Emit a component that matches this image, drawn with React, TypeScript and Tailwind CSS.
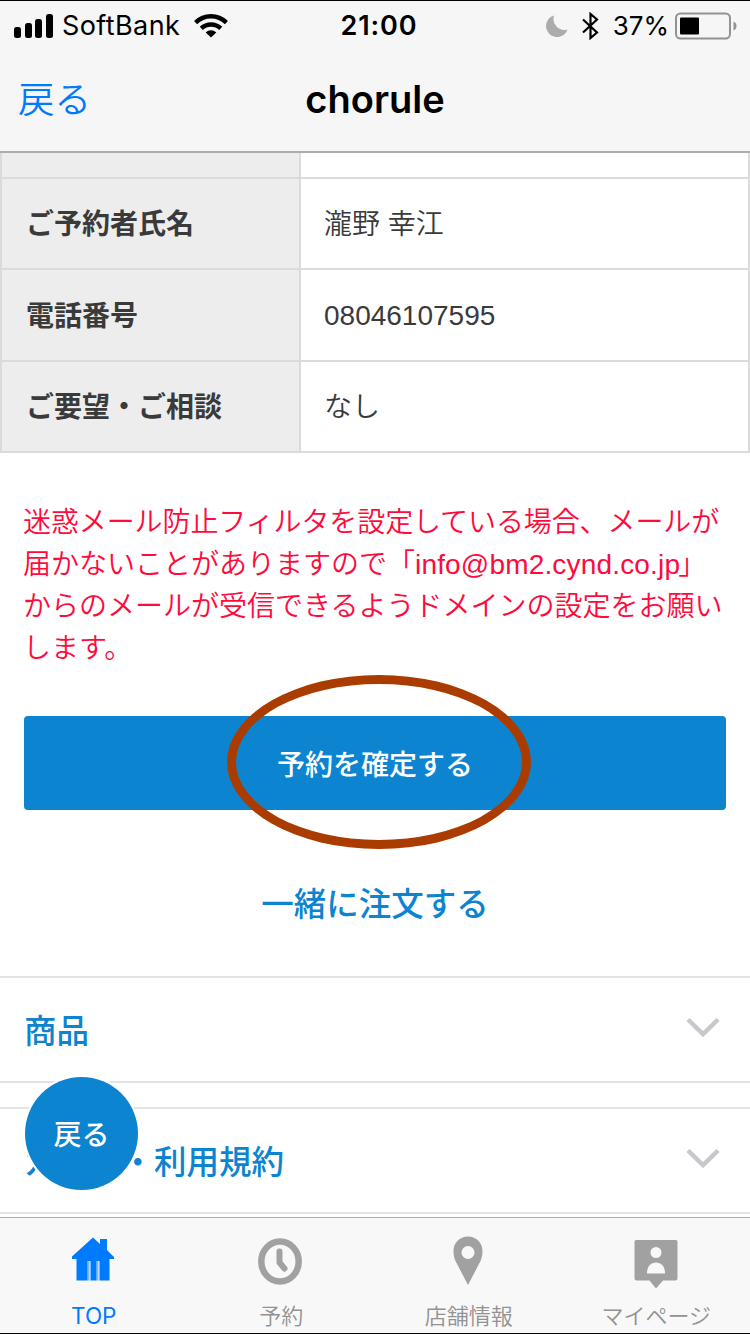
import React from 'react';

interface Row {
  label: string;
  value: string;
  height: string;
}

const rows: Row[] = [
  { label: 'ご予約者氏名', value: '瀧野 幸江', height: 'h-[91px]' },
  { label: '電話番号', value: '08046107595', height: 'h-[92px]' },
  { label: 'ご要望・ご相談', value: 'なし', height: 'h-[91px]' },
];

const StatusBar: React.FC = () => (
  <div className="grid h-[49px] grid-cols-3 items-center px-3.5 font-['Inter','Noto_Sans_CJK_JP',sans-serif] text-black">
    <div className="flex items-center">
      <svg width="40" height="24" viewBox="0 0 40 24">
        <rect x="0" y="13" width="7" height="11" rx="2.5" />
        <rect x="11" y="9" width="7" height="15" rx="2.5" />
        <rect x="21" y="5" width="7" height="19" rx="2.5" />
        <rect x="32" y="0" width="7" height="24" rx="2.5" />
      </svg>
      <span className="ml-2 text-[27px] leading-none tracking-[0.4px]">SoftBank</span>
      <svg className="ml-3.5" width="34" height="24" viewBox="0 0 34 24" fill="none" stroke="#000" strokeWidth="4.4">
        <path d="M1.6 8.6a22 22 0 0 1 30.8 0" />
        <path d="M7.3 14.4a14 14 0 0 1 19.4 0" />
        <path d="M17 23.6l-5.3-5.2a7.6 7.6 0 0 1 10.6 0z" fill="#000" stroke="none" />
      </svg>
    </div>
    <div className="pl-2 text-center text-[27px] font-semibold leading-none tracking-[0.9px]">21:00</div>
    <div className="-mr-px flex items-center justify-end">
      <svg width="22" height="22" viewBox="0 0 22 22" fill="#acacac">
        <path d="M8 0.5A11 11 0 1 0 21.5 14.5A11 11 0 0 1 8 0.5z" />
      </svg>
      <svg className="ml-3.5" width="17" height="28" viewBox="0 0 17 28" fill="none" stroke="#000" strokeWidth="2.2">
        <path d="M1 7.5l14 13-6.5 5.5V2L15 7.5l-14 13" />
      </svg>
      <span className="ml-3.5 text-[26px] leading-none">37%</span>
      <svg className="ml-1.5" width="62" height="28" viewBox="0 0 62 28">
        <rect x="1" y="1.5" width="54" height="25" rx="4.5" fill="none" stroke="#929292" strokeWidth="2" />
        <rect x="5" y="5.5" width="19" height="17" rx="1" />
        <path d="M58.500 9.500c4 1.500 4 7.500 0 9z" fill="#929292" />
      </svg>
    </div>
  </div>
);

const NavBar: React.FC = () => (
  <div className="grid h-[101px] grid-cols-3 items-center px-[18px] font-['Inter','Noto_Sans_CJK_JP',sans-serif]">
    <span className="text-[36.5px] font-[350] leading-none text-[#007aff]">戻る</span>
    <span className="pb-[3px] text-center text-[38px] font-semibold leading-none text-black">chorule</span>
  </div>
);

const Accordion: React.FC<{ title: string }> = ({ title }) => (
  <div className="flex h-[107px] items-center justify-between border-y-2 border-[#e3e3e5] pl-6 pr-[30px]">
    <span className="pt-[5px] text-[32.5px] font-medium leading-none text-[#0c84d0]">{title}</span>
    <svg className="-mt-1" width="34" height="22" viewBox="0 0 34 22" fill="none" stroke="#c8c7cc" strokeWidth="4.5">
      <path d="M2 2.5l15 14.5 15-14.5" />
    </svg>
  </div>
);

const HomeIcon = () => (
  <svg className="-mt-[5px] mr-[2px]" width="42" height="44" viewBox="0 0 42 44" fill="#007aff">
    <path d="M21 0.5L28 7V2h7v11l7 7v2h-4.500v21.500H27.500V24h-3v19.500h-6V24h-3v19.500H4.500V22H0v-2.500z" />
    <path d="M15.500 24h2v19.500h-2zM24.500 24h2v19.500h-2z" opacity="0.5" />
  </svg>
);

const ClockIcon = () => (
  <svg className="mr-[2px] mt-px" width="46" height="49" viewBox="0 0 46 48" fill="none" stroke="#a1a1a1">
    <ellipse cx="23" cy="24" rx="18.700" ry="20" strokeWidth="6.500" />
    <path d="M22.500 14v11l5 6" strokeWidth="6" strokeLinecap="round" strokeLinejoin="round" />
  </svg>
);

const PinIcon = () => (
  <svg className="mr-[2px]" width="30" height="50" viewBox="0 0 30 50" fill="#a1a1a1">
    <path fillRule="evenodd" d="M15 0.5C6.500 0.5 0.5 7 0.5 15c0 3.500 0.5 6.500 2 10L15 49l12.500-24c1.500-3.500 2-6.500 2-10C29.500 7 23.500 0.5 15 0.5zM15 10a6.500 6.500 0 1 1 0 13a6.500 6.500 0 1 1 0-13z" />
  </svg>
);

const ProfileIcon = () => (
  <svg className="mt-[5px]" width="44" height="50" viewBox="0 0 44 50" fill="#a1a1a1">
    <path d="M2 1h40a1.500 1.500 0 0 1 1.500 1.500v37a2 2 0 0 1-2 2H29L22 49.500 15.500 41.500H2.500a2 2 0 0 1-2-2v-37A1.500 1.500 0 0 1 2 1z" />
    <circle cx="22" cy="13.500" r="5.500" fill="#f8f8f8" />
    <path d="M13 34.500c0-7 3.500-11 9-11s9 4 9 11z" fill="#f8f8f8" />
  </svg>
);

const tabs = [
  { label: 'TOP', icon: <HomeIcon />, color: 'text-[#007aff]', font: 'text-[22.5px] font-normal' },
  { label: '予約', icon: <ClockIcon />, color: 'text-[#929292]', font: 'text-[22px] font-[350]' },
  { label: '店舗情報', icon: <PinIcon />, color: 'text-[#929292]', font: 'text-[22px] font-[350]' },
  { label: 'マイページ', icon: <ProfileIcon />, color: 'text-[#929292]', font: 'text-[22px] font-[350]' },
];

const App: React.FC = () => {
  return (
    <div className="relative flex h-[1334px] w-[750px] flex-col overflow-hidden border-y border-black bg-white font-['Liberation_Sans','Noto_Sans_CJK_JP',sans-serif]">
      <header className="border-b-2 border-[#acacac] bg-[#f6f6f6]">
        <StatusBar />
        <NavBar />
      </header>

      {/* Reservation details */}
      <section className="border-x-2 border-[#dbdbdb] text-[28px] leading-none text-[#3a3a3a]">
        <div className="flex h-[26px] border-b-2 border-[#dbdbdb]">
          <div className="w-[299px] border-r-2 border-[#dbdbdb] bg-[#ededed]" />
        </div>
        {rows.map((row) => (
          <div key={row.label} className={`flex border-b-2 border-[#dbdbdb] ${row.height}`}>
            <div className="flex w-[299px] items-center border-r-2 border-[#dbdbdb] bg-[#ededed] pl-6 pt-[3px] font-bold">
              {row.label}
            </div>
            <div className="flex items-center pl-[23px] pt-[2px] font-[350]">{row.value}</div>
          </div>
        ))}
      </section>

      <p className="mt-[49px] whitespace-nowrap pl-[23px] text-[28px] font-[350] leading-[42px] text-[#ff0a3c]">
        <span className="tracking-[-0.1px]">迷惑メール防止フィルタを設定している場合、メールが</span><br />
        届かないことがありますので「<span className="tracking-[0.17px]">info@bm2.cynd.co.jp</span><span className="-ml-[2px]">」</span><br />
        からのメールが受信できるようドメインの設定をお願い<br />
        します。
      </p>

      <div className="relative mx-6 mt-[46px]">
        <button className="h-[94px] w-full rounded bg-[#0c84d0] pt-[5px] text-[28px] font-medium text-white">予約を確定する</button>
        {/* Highlight drawn over the button */}
        <div className="absolute -top-[41px] left-[203px] h-[174px] w-[304px] rounded-[50%] border-[9px] border-[#ab3c00]" />
      </div>

      <div className="flex h-[166px] items-center justify-center pt-6">
        <a className="text-[32.5px] font-medium leading-none text-[#0c84d0]">一緒に注文する</a>
      </div>

      <Accordion title="商品" />
      <div className="mt-6">
        <Accordion title="ガイド・利用規約" />
      </div>

      <nav className="mt-auto grid h-[116px] grid-cols-4 border-t border-[#acacac] bg-[#f8f8f8] font-['Inter','Noto_Sans_CJK_JP',sans-serif]">
        {tabs.map((tab) => (
          <div key={tab.label} className={`flex flex-col items-center ${tab.color}`}>
            <div className="flex h-[86px] items-center">{tab.icon}</div>
            <span className={`leading-[24px] ${tab.font}`}>{tab.label}</span>
          </div>
        ))}
      </nav>

      <button className="absolute left-[25px] top-[1076px] size-[113px] rounded-full bg-[#0c84d0] pt-[5px] text-[28px] font-medium text-white ring-2 ring-white">戻る</button>
    </div>
  );
};

export default App;
